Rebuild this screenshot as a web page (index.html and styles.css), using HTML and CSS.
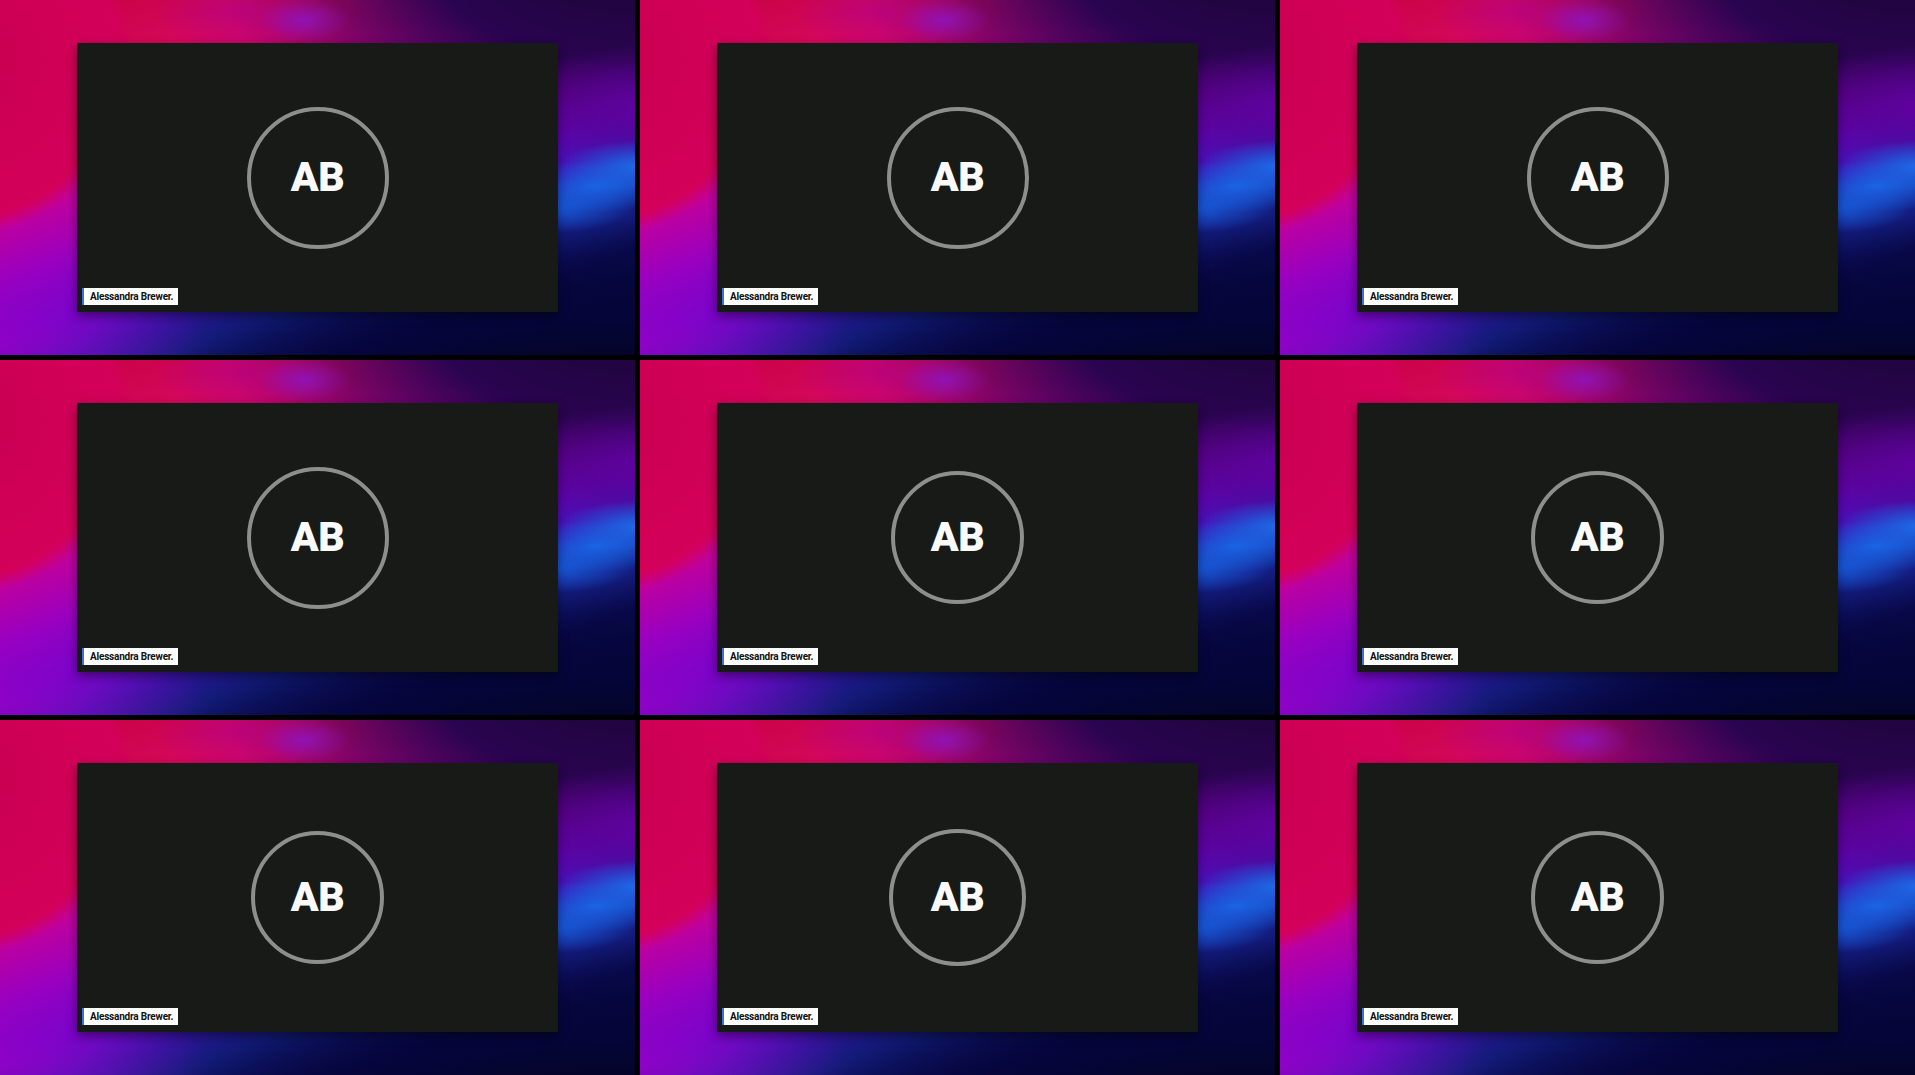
FILE: index.html
```html
<!DOCTYPE html>
<html lang="en">
<head>
<meta charset="utf-8">
<title>Gallery view</title>
<link rel="stylesheet" href="styles.css">
</head>
<body>
<main class="gallery">
  <section class="tile"><div class="card"><div class="avatar avatar--lg"><span class="initials">AB</span></div><div class="name-tag">Alessandra Brewer.</div></div></section>
  <section class="tile"><div class="card"><div class="avatar avatar--lg"><span class="initials">AB</span></div><div class="name-tag">Alessandra Brewer.</div></div></section>
  <section class="tile"><div class="card"><div class="avatar avatar--lg"><span class="initials">AB</span></div><div class="name-tag">Alessandra Brewer.</div></div></section>
  <section class="tile"><div class="card"><div class="avatar avatar--lg"><span class="initials">AB</span></div><div class="name-tag">Alessandra Brewer.</div></div></section>
  <section class="tile"><div class="card"><div class="avatar avatar--sm"><span class="initials">AB</span></div><div class="name-tag">Alessandra Brewer.</div></div></section>
  <section class="tile"><div class="card"><div class="avatar avatar--sm"><span class="initials">AB</span></div><div class="name-tag">Alessandra Brewer.</div></div></section>
  <section class="tile"><div class="card"><div class="avatar avatar--sm"><span class="initials">AB</span></div><div class="name-tag">Alessandra Brewer.</div></div></section>
  <section class="tile"><div class="card"><div class="avatar avatar--md"><span class="initials">AB</span></div><div class="name-tag">Alessandra Brewer.</div></div></section>
  <section class="tile"><div class="card"><div class="avatar avatar--sm"><span class="initials">AB</span></div><div class="name-tag">Alessandra Brewer.</div></div></section>
</main>
</body>
</html>
```

FILE: styles.css
```css
html, body {
  margin: 0;
  padding: 0;
  background: #000;
  width: 1915px;
  height: 1075px;
  overflow: hidden;
}

.gallery {
  display: grid;
  grid-template-columns: repeat(3, 635px);
  grid-template-rows: repeat(3, 355px);
  gap: 5px;
}

.tile {
  display: flex;
  align-items: center;
  justify-content: center;
  background:
    radial-gradient(ellipse 46px 22px at 304px 20px, rgba(140, 24, 210, 0.7) 0%, rgba(140, 24, 210, 0) 100%),
    radial-gradient(ellipse 90px 40px at 240px 12px, rgba(176, 0, 140, 0.65) 0%, rgba(176, 0, 140, 0) 100%),
    radial-gradient(ellipse 80px 26px at 640px 166px, rgba(28, 112, 236, 0.95) 0%, rgba(28, 112, 236, 0) 100%),
    radial-gradient(ellipse 80px 26px at 596px 186px, rgba(24, 104, 230, 0.95) 0%, rgba(24, 104, 230, 0) 100%),
    radial-gradient(ellipse 80px 26px at 552px 207px, rgba(22, 96, 222, 0.9) 0%, rgba(22, 96, 222, 0) 100%),
    radial-gradient(ellipse 130px 60px at 645px 105px, rgba(104, 0, 168, 0.8) 0%, rgba(104, 0, 168, 0) 100%),
    radial-gradient(ellipse 210px 80px at 0px 345px, rgba(156, 0, 196, 0.75) 0%, rgba(156, 0, 196, 0) 100%),
    radial-gradient(ellipse 560px 180px at 610px 395px, #03031a 0%, #05053a 45%, rgba(8, 8, 70, 0) 100%),
    radial-gradient(ellipse 400px 200px at 620px -30px, #1c0438 0%, #2a0450 45%, rgba(50, 6, 100, 0) 100%),
    radial-gradient(circle 175px at -40px 60px, #c80050 0%, #d4005a 90%, rgba(212, 0, 90, 0) 100%),
    linear-gradient(160deg, #c2003c 0%, #d6085a 18%, #c0009c 38%, #9a00c0 48%, #6a06cc 58%, #3a18b8 65%, #1a2aa0 71%, #0a0a50 82%, #05052a 100%);
}

.card {
  position: relative;
  width: 481px;
  height: 269px;
  background: #181a18;
  display: flex;
  align-items: center;
  justify-content: center;
  box-shadow: 0 4px 10px rgba(0, 0, 0, 0.45);
}

.avatar {
  box-sizing: border-box;
  border: 4px solid #8e8e8e;
  border-radius: 50%;
  display: flex;
  align-items: center;
  justify-content: center;
}

.avatar--lg { width: 142px; height: 142px; }
.avatar--md { width: 137px; height: 137px; }
.avatar--sm { width: 133px; height: 133px; }

.initials {
  font-family: Roboto, "Liberation Sans", sans-serif;
  font-weight: 900;
  font-size: 41px;
  line-height: 1;
  color: #fafafa;
  letter-spacing: -0.5px;
}

.name-tag {
  position: absolute;
  left: 5px;
  bottom: 7px;
  height: 17px;
  line-height: 17px;
  padding: 0 5px 0 6px;
  border-left: 2px solid #3d6fd8;
  background: #fff;
  color: #111;
  font-family: Roboto, "Liberation Sans", sans-serif;
  font-weight: 700;
  font-size: 10px;
  letter-spacing: -0.2px;
  white-space: nowrap;
}
```
